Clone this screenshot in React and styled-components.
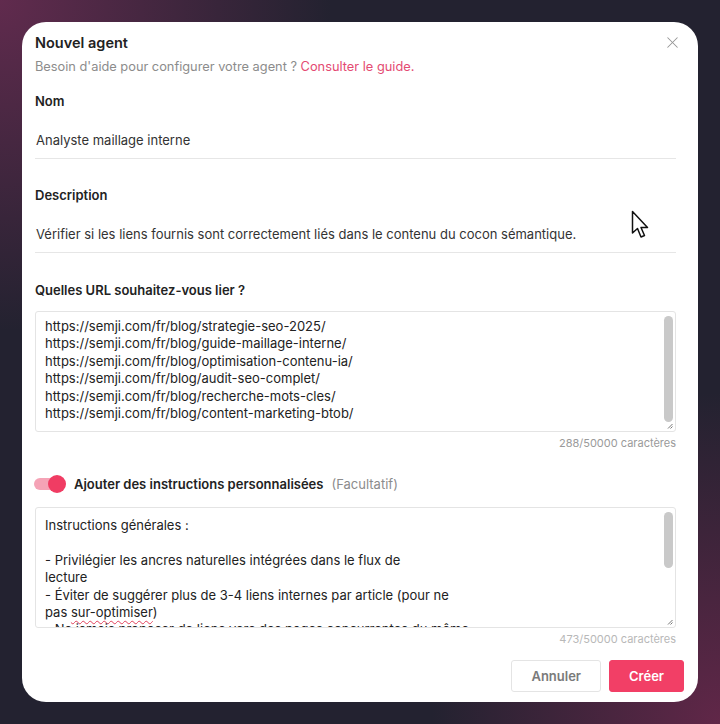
import React from 'react'
import styled, { createGlobalStyle } from 'styled-components'
import { X } from 'lucide-react'

const urls = `https://semji.com/fr/blog/strategie-seo-2025/
https://semji.com/fr/blog/guide-maillage-interne/
https://semji.com/fr/blog/optimisation-contenu-ia/
https://semji.com/fr/blog/audit-seo-complet/
https://semji.com/fr/blog/recherche-mots-cles/
https://semji.com/fr/blog/content-marketing-btob/`

const ResizeGrip = () => (
    <Grip width="6" height="6" viewBox="0 0 6 6">
        <path d="M5.5 1 L1 5.5 M5.5 3.5 L3.5 5.5" stroke="#666" strokeWidth="0.9" />
    </Grip>
)

const App = () => {
    return (
        <>
            <GlobalStyle />
            <Page>
                <Modal>
                    <Header>
                        <Title>Nouvel agent</Title>
                        <CloseButton>
                            <X size={19} strokeWidth={1.3} />
                        </CloseButton>
                    </Header>
                    <Body>
                        <Subtitle>
                            Besoin d'aide pour configurer votre agent ? <Link>Consulter le guide.</Link>
                        </Subtitle>

                        <Label $gap={19}>Nom</Label>
                        <LineInput>Analyste maillage interne</LineInput>

                        <Label $gap={28}>Description</Label>
                        <LineInput>Vérifier si les liens fournis sont correctement liés dans le contenu du cocon sémantique.</LineInput>

                        <Label $gap={29}>Quelles URL souhaitez-vous lier ?</Label>
                        <TextBox $gap={13}>
                            <TextContent $top={6}>{urls}</TextContent>
                            <Scrollbar><Thumb $top={4} $height={106} /></Scrollbar>
                            <ResizeGrip />
                        </TextBox>
                        <Counter>288/50000 caractères</Counter>

                        <ToggleRow>
                            <Toggle>
                                <Track />
                                <Knob />
                            </Toggle>
                            <ToggleLabel>Ajouter des instructions personnalisées</ToggleLabel>
                            <Optional>(Facultatif)</Optional>
                        </ToggleRow>
                        <TextBox $gap={13}>
                            <TextContent $top={9}>
                                Instructions générales :{'\n\n'}- Privilégier les ancres naturelles intégrées dans le flux de{'\n'}lecture{'\n'}- Éviter de suggérer plus de 3-4 liens internes par article (pour ne{'\n'}pas <Squiggle>sur-optimiser</Squiggle>){'\n'}- Ne jamais proposer de liens vers des pages concurrentes du même
                            </TextContent>
                            <Scrollbar><Thumb $top={4} $height={56} /></Scrollbar>
                            <ResizeGrip />
                        </TextBox>
                        <Counter $light>473/50000 caractères</Counter>
                    </Body>
                    <Footer>
                        <Button>Annuler</Button>
                        <Button $primary>Créer</Button>
                    </Footer>
                    <Cursor width="18" height="30" viewBox="0 0 18 30">
                        <path d="M1.5 1.5 L1.5 23 L6.5 18.5 L10 27 L13.5 25.5 L10 17.5 L16.5 17.5 Z" fill="#fff" stroke="#111" strokeWidth="1.5" strokeLinejoin="round" />
                    </Cursor>
                </Modal>
            </Page>
        </>
    )
}

export default App

const GlobalStyle = createGlobalStyle`
body{
    margin: 0;
    font-family: Inter, "Noto Sans", sans-serif;
}
`

const Page = styled.div`
width: 720px;
height: 724px;
box-sizing: border-box;
padding: 22px;
background:
    radial-gradient(ellipse 460px 460px at 0% 0%, rgba(112,45,85,0.8), transparent 72%),
    radial-gradient(ellipse 400px 460px at 100% 100%, rgba(112,40,78,0.8), transparent 72%),
    #232230;
`

const Modal = styled.div`
position: relative;
width: 676px;
height: 680px;
background: #fff;
border-radius: 24px;
display: flex;
flex-direction: column;
overflow: hidden;
`

const Header = styled.div`
display: flex;
justify-content: space-between;
align-items: center;
padding: 10px 16px 0 13px;
height: 21px;
`

const Title = styled.div`
font-size: 14.5px;
font-weight: 600;
color: #222;
`

const CloseButton = styled.div`
color: #959595;
display: flex;
align-items: center;
`

const Body = styled.div`
flex: 1;
padding: 0 22px 0 13px;
display: flex;
flex-direction: column;
`

const Subtitle = styled.div`
margin-top: 6px;
font-size: 12.8px;
color: #8c8c8c;
`

const Link = styled.span`
color: #e44a72;
`

const Label = styled.div`
margin-top: ${p => p.$gap}px;
font-size: 13px;
font-weight: 600;
color: #222;
`

const LineInput = styled.div`
margin-top: 23px;
padding: 0 1px 10px;
font-size: 13px;
color: #333;
border-bottom: 1px solid #e6e6e6;
white-space: nowrap;
`

const TextBox = styled.div`
position: relative;
margin-top: ${p => p.$gap}px;
height: 121px;
border: 1px solid #e4e4e4;
border-radius: 3px;
box-sizing: border-box;
overflow: hidden;
`

const TextContent = styled.div`
padding: ${p => p.$top}px 20px 0 9px;
font-size: 13px;
line-height: 17.4px;
color: #222;
white-space: pre-wrap;
`

const Scrollbar = styled.div`
position: absolute;
top: 0;
right: 2px;
width: 9px;
bottom: 10px;
`

const Thumb = styled.div`
position: absolute;
left: 0;
right: 0;
top: ${p => p.$top}px;
height: ${p => p.$height}px;
background: #c9c9c9;
border-radius: 5px;
`

const Grip = styled.svg`
position: absolute;
right: 2px;
bottom: 2px;
`

const Squiggle = styled.span`
text-decoration: underline wavy #e0405a;
text-decoration-thickness: 1px;
text-underline-offset: 3px;
`

const Counter = styled.div`
margin-top: 4px;
text-align: right;
font-size: 11px;
color: ${p => p.$light ? '#b8b8b8' : '#9a9a9a'};
`

const ToggleRow = styled.div`
margin-top: 24px;
display: flex;
align-items: center;
gap: 8px;
`

const Toggle = styled.div`
position: relative;
width: 32px;
height: 20px;
margin-left: -1px;
`

const Track = styled.div`
position: absolute;
left: 0;
top: 4px;
width: 26px;
height: 12px;
border-radius: 6px;
background: #f5a3b6;
`

const Knob = styled.div`
position: absolute;
right: 0;
top: 1px;
width: 18px;
height: 18px;
border-radius: 50%;
background: #f03c63;
`

const ToggleLabel = styled.span`
font-size: 13px;
font-weight: 600;
color: #222;
`

const Optional = styled.span`
font-size: 13px;
color: #8c8c8c;
`

const Footer = styled.div`
display: flex;
justify-content: flex-end;
gap: 8px;
padding: 0 14px 10px 0;
`

const Button = styled.div`
height: 32px;
padding: 0 19px;
display: flex;
align-items: center;
justify-content: center;
border-radius: 3px;
font-size: 13px;
font-weight: 600;
box-sizing: border-box;
background: ${p => p.$primary ? '#f23f66' : '#fff'};
color: ${p => p.$primary ? '#fff' : '#7a7a7a'};
border: 1px solid ${p => p.$primary ? '#f23f66' : '#e4e4e4'};
`

const Cursor = styled.svg`
position: absolute;
left: 609px;
top: 188px;
`
